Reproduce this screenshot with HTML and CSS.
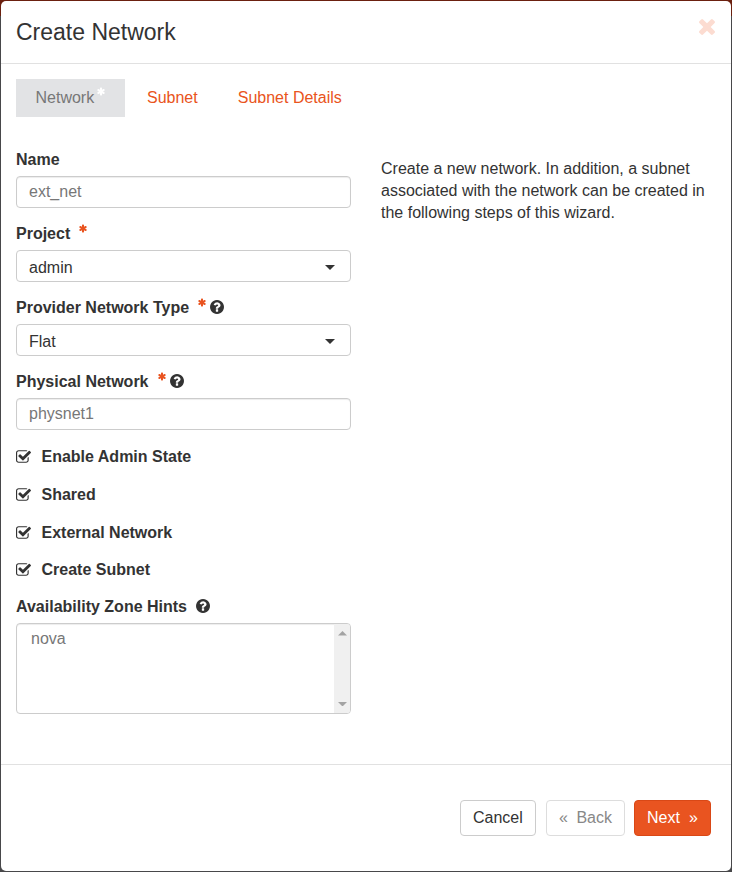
FILE: index.html
```html
<!DOCTYPE html>
<html lang="en">
<head>
<meta charset="utf-8">
<title>Create Network</title>
<link rel="stylesheet" href="styles.css">
</head>
<body>
<svg class="defs" width="0" height="0" aria-hidden="true">
<symbol id="close" viewBox="302 366 1188 1188"><path d="M1490 1322q0 40-28 68l-136 136q-28 28-68 28t-68-28l-294-294-294 294q-28 28-68 28t-68-28l-136-136q-28-28-28-68t28-68l294-294-294-294q-28-28-28-68t28-68l136-136q28-28 68-28t68 28l294 294 294-294q28-28 68-28t68 28l136 136q28 28 28 68t-28 68l-294 294 294 294q28 28 28 68z"/></symbol>
<symbol id="help" viewBox="128 128 1536 1536"><path d="M1024 1376v-192q0-14-9-23t-23-9h-192q-14 0-23 9t-9 23v192q0 14 9 23t23 9h192q14 0 23-9t9-23zm256-672q0-88-55.500-163t-138.500-116-170-41q-243 0-371 213-15 24 8 42l132 100q7 6 19 6 16 0 25-12 53-68 86-92 34-24 86-24 48 0 85.500 26t37.500 59q0 38-20 61t-68 45q-63 28-115.500 86.500t-52.500 125.500v36q0 14 9 23t23 9h192q14 0 23-9t9-23q0-19 21.500-49.500t54.500-49.500q32-18 49-28.500t46-35 44.500-48 28-60.500 12.500-81zm384 192q0 209-103 385.500t-279.500 279.500-385.500 103-385.500-103-279.500-279.500-103-385.500 103-385.500 279.500-279.500 385.500-103 385.500 103 279.500 279.500 103 385.500z"/></symbol>
<symbol id="star" viewBox="128 128 1536 1536"><path d="M1546 1050q46 26 59.500 77.500t-12.500 97.500l-64 110q-26 46-77.500 59.500t-97.500-12.500l-266-153v307q0 52-38 90t-90 38h-128q-52 0-90-38t-38-90v-307l-266 153q-46 26-97.500 12.500t-77.500-59.500l-64-110q-26-46-12.500-97.500t59.500-77.500l266-154-266-154q-46-26-59.500-77.500t12.500-97.500l64-110q26-46 77.500-59.500t97.500 12.500l266 153v-307q0-52 38-90t90-38h128q52 0 90 38t38 90v307l266-153q46-26 97.500-12.500t77.500 59.500l64 110q26 46 12.500 97.500t-59.500 77.500l-266 154z"/></symbol>
<symbol id="check" viewBox="64 128 1664 1408"><path d="M1472 930v318q0 119-84.500 203.500t-203.500 84.500h-832q-119 0-203.500-84.500t-84.500-203.500v-832q0-119 84.500-203.500t203.500-84.500h832q63 0 117 25 15 7 18 23 3 17-9 29l-49 49q-10 10-23 10-3 0-9-2-23-6-45-6h-832q-66 0-113 47t-47 113v832q0 66 47 113t113 47h832q66 0 113-47t47-113v-254q0-13 9-22l64-64q10-10 23-10 6 0 12 3 20 8 20 29zm231-489l-814 814q-24 24-57 24t-57-24l-430-430q-24-24-24-57t24-57l110-110q24-24 57-24t57 24l263 263 647-647q24-24 57-24t57 24l110 110q24 24 24 57t-24 57z"/></symbol>
</svg>
<div class="modal">
  <header class="header">
    <h1>Create Network</h1>
    <svg class="close"><use href="#close"/></svg>
  </header>
  <main class="body">
    <nav class="tabs">
      <a class="tab active"><span>Network</span><svg class="star"><use href="#star"/></svg></a>
      <a class="tab"><span>Subnet</span></a>
      <a class="tab"><span>Subnet Details</span></a>
    </nav>
    <div class="columns">
      <form class="form">
        <div class="group">
          <div class="label"><span>Name</span></div>
          <div class="control input"><span>ext_net</span></div>
        </div>
        <div class="group">
          <div class="label"><span>Project</span><svg class="star"><use href="#star"/></svg></div>
          <div class="control select"><span>admin</span><svg class="caret" viewBox="0 0 10 5"><path d="M0 0h10l-5 5z"/></svg></div>
        </div>
        <div class="group">
          <div class="label"><span>Provider Network Type</span><svg class="star"><use href="#star"/></svg><svg class="help"><use href="#help"/></svg></div>
          <div class="control select"><span>Flat</span><svg class="caret" viewBox="0 0 10 5"><path d="M0 0h10l-5 5z"/></svg></div>
        </div>
        <div class="group">
          <div class="label"><span>Physical Network</span><svg class="star"><use href="#star"/></svg><svg class="help"><use href="#help"/></svg></div>
          <div class="control input"><span>physnet1</span></div>
        </div>
        <div class="checks">
          <div class="check"><svg><use href="#check"/></svg><span>Enable Admin State</span></div>
          <div class="check"><svg><use href="#check"/></svg><span>Shared</span></div>
          <div class="check"><svg><use href="#check"/></svg><span>External Network</span></div>
          <div class="check last"><svg><use href="#check"/></svg><span>Create Subnet</span></div>
        </div>
        <div class="label zone"><span>Availability Zone Hints</span><svg class="help"><use href="#help"/></svg></div>
        <div class="listbox">
          <div class="option">nova</div>
          <div class="scrollbar"><svg viewBox="0 0 8 4"><path d="M0 4h8l-4-4z"/></svg><svg viewBox="0 0 8 4"><path d="M0 0h8l-4 4z"/></svg></div>
        </div>
      </form>
      <p class="description">Create a new network. In addition, a subnet<br>associated with the network can be created in<br>the following steps of this wizard.</p>
    </div>
  </main>
  <footer class="footer">
    <div class="btn cancel">Cancel</div>
    <div class="btn back"><span>«</span><span>Back</span></div>
    <div class="btn next"><span>Next</span><span>»</span></div>
  </footer>
</div>
</body>
</html>
```
FILE: styles.css
```css
* { box-sizing: border-box; }
body {
  margin: 0;
  padding: 1px;
  height: 872px;
  overflow: hidden;
  background: linear-gradient(#6b200f 16px, #48484a 16px);
  font: 16px/22px "Liberation Sans", Arial, sans-serif;
  color: #333;
}
svg { display: block; flex: none; fill: currentColor; }
.defs { position: absolute; }
.modal {
  display: flex;
  flex-direction: column;
  height: 870px;
  background: #fff;
  border-radius: 5px;
}
.header {
  display: flex;
  justify-content: space-between;
  height: 63px;
  padding: 18px 16px 0 15px;
  border-bottom: 1px solid #e1e1e1;
}
h1 { margin: 0; font-size: 23px; line-height: 26px; font-weight: 400; }
.close { width: 16px; height: 16px; color: #fcdcd1; }
.body { height: 700px; padding: 15px; }
.tabs { display: flex; gap: 2px; height: 38px; }
.tab { display: flex; height: 38px; padding: 8px 19px; color: #e95420; }
.tab.active { width: 109px; margin-right: 1px; padding-left: 19.5px; background: #e2e3e5; color: #777; }
.tab.active .star { width: 8px; height: 9px; margin-left: 3px; color: #fff; }
.columns { display: flex; gap: 30px; padding-top: 32px; }
.form { width: 335px; }
.group { margin-bottom: 14px; }
.label { display: flex; height: 22px; margin-bottom: 5px; font-weight: 700; }
.group .label { margin-bottom: 5px; }
.group + .group .label { margin-top: 15px; }
.group { margin-bottom: 0; }
.label .star { width: 8px; height: 9px; margin: 1px 0 0 9px; color: #e95420; }
.label .help { width: 14px; height: 14px; margin: 3px 0 0 4px; }
.control {
  display: flex;
  height: 32px;
  padding: 4px 12px;
  border: 1px solid #ccc;
  border-radius: 4px;
}
.input { color: #777; box-shadow: inset 0 1px 1px rgba(0,0,0,.075); }
.select { justify-content: space-between; padding-top: 6px; }
.caret { width: 10px; height: 5px; margin: 8px 3px 0 0; }
.checks { display: grid; row-gap: 16px; padding-top: 16px; }
.check { display: flex; height: 22px; font-weight: 700; }
.check svg { width: 15px; height: 13px; margin: 4px 10.5px 0 0; }
.check.last { margin-top: -1px; }
.label.zone { margin-top: 15px; }
.zone .help { margin-left: 9px; }
.listbox {
  display: flex;
  justify-content: space-between;
  height: 91px;
  border: 1px solid #ccc;
  border-radius: 4px;
  box-shadow: inset 0 1px 1px rgba(0,0,0,.075);
  overflow: hidden;
}
.option { padding: 4px 14px; color: #777; }
.scrollbar {
  display: flex;
  flex-direction: column;
  justify-content: space-between;
  align-items: center;
  width: 16px;
  padding: 7px 0;
  background: #f0f0f0;
  color: #a3a3a3;
}
.scrollbar svg { width: 9px; height: 4.5px; }
.description { margin: 9px 0 0; white-space: nowrap; }
.footer {
  display: flex;
  flex: 1;
  justify-content: flex-end;
  padding: 35px 20px 0;
  border-top: 1px solid #e1e1e1;
}
.btn {
  display: flex;
  justify-content: space-between;
  height: 36px;
  padding: 6px 12px;
  border: 1px solid #ccc;
  border-radius: 4px;
}
.cancel { width: 76px; margin-right: 10px; }
.back { width: 79px; margin-right: 9px; color: #888; border-color: #ddd; }
.next { width: 77px; color: #fff; background: #e95420; border-color: #d94816; }
```
